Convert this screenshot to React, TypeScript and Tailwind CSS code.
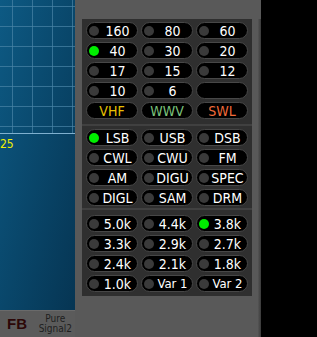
import React from 'react';

type Btn = { label: string; led?: boolean; on?: boolean; color?: string; small?: boolean };

const bands: Btn[] = [
  { label: '160', led: true },
  { label: '80', led: true },
  { label: '60', led: true },
  { label: '40', led: true, on: true },
  { label: '30', led: true },
  { label: '20', led: true },
  { label: '17', led: true },
  { label: '15', led: true },
  { label: '12', led: true },
  { label: '10', led: true },
  { label: '6', led: true },
  { label: '' },
  { label: 'VHF', color: 'text-[#e8c000]' },
  { label: 'WWV', color: 'text-[#7cc47c]' },
  { label: 'SWL', color: 'text-[#f26b3a]' },
];

const modes: Btn[] = [
  { label: 'LSB', led: true, on: true },
  { label: 'USB', led: true },
  { label: 'DSB', led: true },
  { label: 'CWL', led: true },
  { label: 'CWU', led: true },
  { label: 'FM', led: true },
  { label: 'AM', led: true },
  { label: 'DIGU', led: true },
  { label: 'SPEC', led: true },
  { label: 'DIGL', led: true },
  { label: 'SAM', led: true },
  { label: 'DRM', led: true },
];

const filters: Btn[] = [
  { label: '5.0k', led: true },
  { label: '4.4k', led: true },
  { label: '3.8k', led: true, on: true },
  { label: '3.3k', led: true },
  { label: '2.9k', led: true },
  { label: '2.7k', led: true },
  { label: '2.4k', led: true },
  { label: '2.1k', led: true },
  { label: '1.8k', led: true },
  { label: '1.0k', led: true },
  { label: 'Var 1', led: true, small: true },
  { label: 'Var 2', led: true, small: true },
];

function PillButton({ b }: { b: Btn }) {
  return (
    <div className="h-[17px] rounded-full border border-[#474747] bg-black flex items-center">
      {b.led && (
        <span
          className={`ml-[2px] w-[10px] h-[10px] rounded-full shrink-0 ${
            b.on ? 'bg-[#00ee00]' : 'bg-[#3a3a3a]'
          }`}
        />
      )}
      <span
        className={`flex-1 text-center leading-none ${b.small ? 'text-[13px]' : 'text-[14px]'} ${
          b.color ?? 'text-white'
        } ${b.led ? 'pr-[1px]' : ''}`}
      >
        {b.label}
      </span>
    </div>
  );
}

function Section({ items }: { items: Btn[] }) {
  return (
    <div className="grid grid-cols-[52px_52px_52px] gap-x-[3px] gap-y-[3px] px-[4px]">
      {items.map((b, i) => (
        <PillButton key={i} b={b} />
      ))}
    </div>
  );
}

function Grid() {
  const v = [12, 32, 52, 72];
  const h = [6, 26, 46, 66, 86, 106, 126];
  return (
    <svg width="75" height="134" className="absolute left-0 top-0">
      {v.map((x) => (
        <line key={x} x1={x + 0.5} y1={0} x2={x + 0.5} y2={133} stroke="#4a84a6" strokeOpacity="0.7" />
      ))}
      {h.map((y) => (
        <line key={y} x1={0} y1={y + 0.5} x2={75} y2={y + 0.5} stroke="#4a84a6" strokeOpacity="0.7" />
      ))}
      <line x1={0} y1={133.5} x2={75} y2={133.5} stroke="#7fb0cf" />
    </svg>
  );
}

export default function App() {
  return (
    <div
      className="w-[317px] h-[337px] flex bg-black overflow-hidden"
      style={{ fontFamily: '"DejaVu Sans Condensed", "DejaVu Sans", sans-serif', fontStretch: 'condensed' }}
    >
      {/* left spectrum */}
      <div className="w-[75px] flex flex-col shrink-0">
        <div className="relative h-[310px] bg-gradient-to-br from-[#0d5a84] to-[#063553]">
          <Grid />
          <div className="absolute left-0 top-[138px] text-[12px] leading-none text-[#f0f000]">25</div>
        </div>
        <div className="h-[27px] bg-[#5b5b5b] border-t border-[#6a6a6a] flex items-center">
          <span className="ml-[7px] text-[15px] font-bold text-[#2c0707]" style={{ fontFamily: '"Liberation Sans", sans-serif' }}>
            FB
          </span>
          <span className="ml-auto mr-[3px] text-[10px] leading-[10px] text-[#1e1e1e] text-center">
            Pure
            <br />
            Signal2
          </span>
        </div>
      </div>

      {/* button column */}
      <div className="w-[186px] shrink-0 bg-[#595959] pt-[19px] pl-[7px] flex">
        <div className="w-[170px] h-[277px] bg-[#2f2f2f] pt-[3px] pb-[3px] flex flex-col">
          <Section items={bands} />
          <div className="mt-[5px] h-[2px] bg-[#404040]" />
          <div className="mt-[3px]">
            <Section items={modes} />
          </div>
          <div className="mt-[2px] h-[2px] bg-[#404040]" />
          <div className="mt-[5px]">
            <Section items={filters} />
          </div>
        </div>
        <div className="ml-auto w-[3px] h-full bg-gradient-to-r from-[#555] to-[#3a3a3a]" />
      </div>

      <div className="flex-1 bg-black" />
    </div>
  );
}
